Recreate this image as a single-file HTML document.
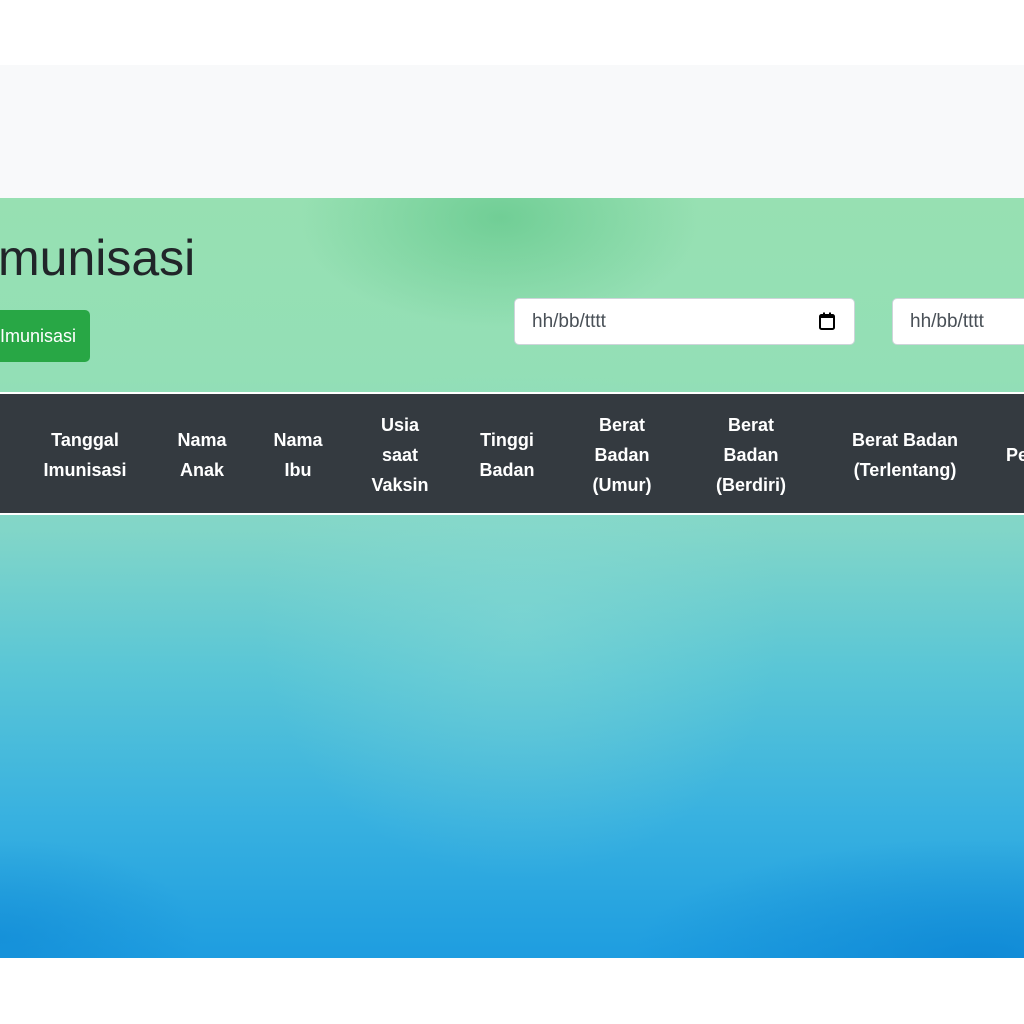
<!DOCTYPE html>
<html><head><meta charset="utf-8"><style>
*{margin:0;padding:0;box-sizing:border-box}
body{width:1024px;height:1024px;overflow:hidden;background:#fff;font-family:"Liberation Sans",sans-serif;position:relative}
.gray{position:absolute;left:0;top:65px;width:1024px;height:133px;background:#f8f9fa}
.grad{position:absolute;left:0;top:198px;width:1024px;height:760px;
background:
radial-gradient(ellipse 200px 110px at 500px 20px,rgba(100,200,140,.75),rgba(100,200,140,0)),
radial-gradient(ellipse 260px 260px at 520px 420px,rgba(140,220,210,.45),rgba(140,220,210,0)),
radial-gradient(ellipse 350px 120px at 980px 760px,rgba(10,130,210,.7),rgba(10,130,210,0)),
radial-gradient(ellipse 200px 100px at 0px 740px,rgba(10,130,210,.5),rgba(10,130,210,0)),
linear-gradient(180deg,#97e0b2 0px,#93dfb6 180px,#82d6c8 330px,#5ac6d6 470px,#38b1e0 620px,#1e9de0 760px);}
h1{position:absolute;left:-2px;top:229px;font-size:50px;font-weight:normal;color:#212529}
.btn{position:absolute;left:-10px;top:310px;width:100px;height:52px;background:#28a745;border-radius:5px;color:#fff;font-size:18px;line-height:52px;padding-left:10px}
.inp{position:absolute;top:298px;height:47px;background:#fff;border:1px solid #ced4da;border-radius:5px;font-size:19px;color:#495057;line-height:45px;padding-left:17px}
.th{position:absolute;left:0;top:392px;width:1024px;height:123px;background:#343a40;border-top:2px solid #fff;border-bottom:2px solid #fff}
.c{position:absolute;color:#fff;font-weight:bold;font-size:18px;line-height:30px;text-align:center;transform:translateX(-50%);white-space:nowrap}
</style></head><body>
<div class="gray"></div>
<div class="grad"></div>
<h1>munisasi</h1>
<div class="btn">Imunisasi</div>
<div class="inp" style="left:514px;width:341px">hh/bb/tttt
<svg style="position:absolute;left:303px;top:12px" width="18" height="20" viewBox="0 0 18 20"><rect x="2" y="4" width="14" height="14" rx="1.5" fill="none" stroke="#000" stroke-width="2"/><rect x="2" y="4" width="14" height="3" fill="#000"/><rect x="5" y="1.5" width="2" height="4" fill="#000"/><rect x="11" y="1.5" width="2" height="4" fill="#000"/></svg></div>
<div class="inp" style="left:892px;width:200px">hh/bb/tttt</div>
<div class="th">
<div class="c" style="left:85px;top:31px">Tanggal<br>Imunisasi</div>
<div class="c" style="left:202px;top:31px">Nama<br>Anak</div>
<div class="c" style="left:298px;top:31px">Nama<br>Ibu</div>
<div class="c" style="left:400px;top:16px">Usia<br>saat<br>Vaksin</div>
<div class="c" style="left:507px;top:31px">Tinggi<br>Badan</div>
<div class="c" style="left:622px;top:16px">Berat<br>Badan<br>(Umur)</div>
<div class="c" style="left:751px;top:16px">Berat<br>Badan<br>(Berdiri)</div>
<div class="c" style="left:905px;top:31px">Berat Badan<br>(Terlentang)</div>
<div class="c" style="left:1006px;top:46px;transform:none">Pe</div>
</div>
</body></html>
